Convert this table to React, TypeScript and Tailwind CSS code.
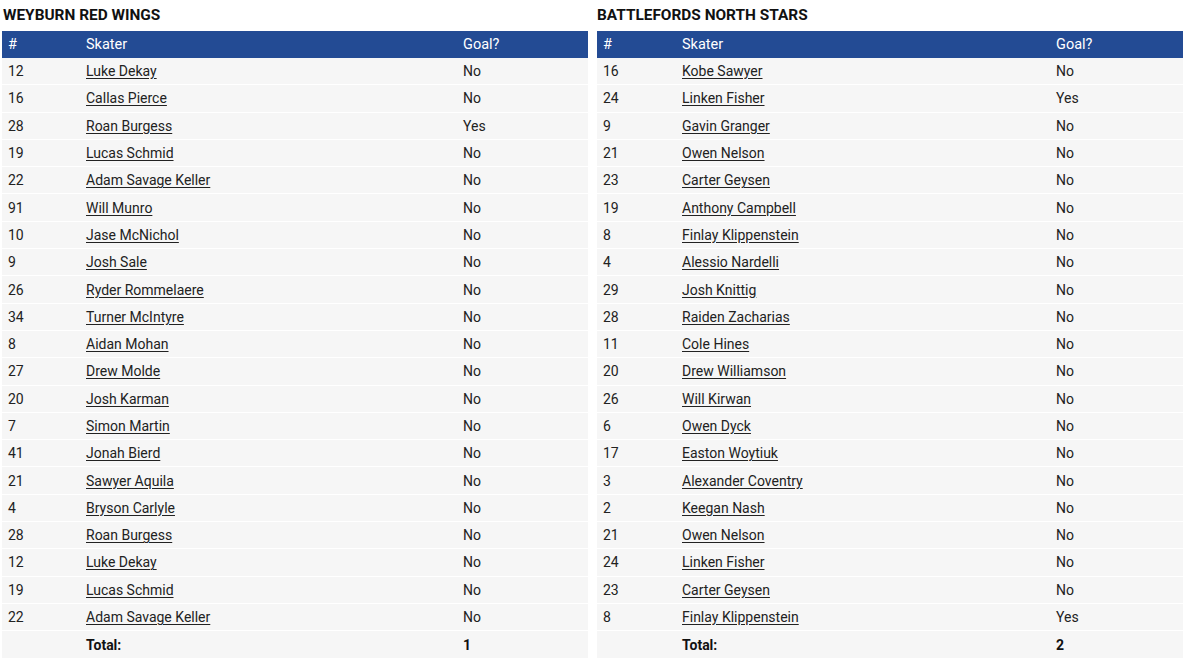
type Row = [number, string, string];

const weyburn: Row[] = [
  [12, "Luke Dekay", "No"],
  [16, "Callas Pierce", "No"],
  [28, "Roan Burgess", "Yes"],
  [19, "Lucas Schmid", "No"],
  [22, "Adam Savage Keller", "No"],
  [91, "Will Munro", "No"],
  [10, "Jase McNichol", "No"],
  [9, "Josh Sale", "No"],
  [26, "Ryder Rommelaere", "No"],
  [34, "Turner McIntyre", "No"],
  [8, "Aidan Mohan", "No"],
  [27, "Drew Molde", "No"],
  [20, "Josh Karman", "No"],
  [7, "Simon Martin", "No"],
  [41, "Jonah Bierd", "No"],
  [21, "Sawyer Aquila", "No"],
  [4, "Bryson Carlyle", "No"],
  [28, "Roan Burgess", "No"],
  [12, "Luke Dekay", "No"],
  [19, "Lucas Schmid", "No"],
  [22, "Adam Savage Keller", "No"],
];

const battlefords: Row[] = [
  [16, "Kobe Sawyer", "No"],
  [24, "Linken Fisher", "Yes"],
  [9, "Gavin Granger", "No"],
  [21, "Owen Nelson", "No"],
  [23, "Carter Geysen", "No"],
  [19, "Anthony Campbell", "No"],
  [8, "Finlay Klippenstein", "No"],
  [4, "Alessio Nardelli", "No"],
  [29, "Josh Knittig", "No"],
  [28, "Raiden Zacharias", "No"],
  [11, "Cole Hines", "No"],
  [20, "Drew Williamson", "No"],
  [26, "Will Kirwan", "No"],
  [6, "Owen Dyck", "No"],
  [17, "Easton Woytiuk", "No"],
  [3, "Alexander Coventry", "No"],
  [2, "Keegan Nash", "No"],
  [21, "Owen Nelson", "No"],
  [24, "Linken Fisher", "No"],
  [23, "Carter Geysen", "No"],
  [8, "Finlay Klippenstein", "Yes"],
];

// column widths differ a little per table (auto layout in the original)
function TeamTable({
  name,
  rows,
  total,
  numCol,
  skaterCol,
}: {
  name: string;
  rows: Row[];
  total: number;
  numCol: string;
  skaterCol: string;
}) {
  return (
    <div className="w-[586px] shrink-0">
      <h2 className="flex h-[31px] items-center text-[15.4px] font-bold uppercase text-[#111]">{name}</h2>
      <div className="flex h-[27px] items-center bg-[#234b94] text-[14.5px] text-white">
        <div className={`${numCol} pl-[6px]`}>#</div>
        <div className={skaterCol}>Skater</div>
        <div>Goal?</div>
      </div>
      {rows.map(([num, skater, goal], i) => (
        <div key={i} className="flex h-[27.3px] items-center border-b border-white bg-[#f6f6f6] pt-px text-[14px] text-[#222]">
          <div className={`${numCol} pl-[6px]`}>{num}</div>
          <div className={skaterCol}>
            <a href="#" className="underline underline-offset-2">{skater}</a>
          </div>
          <div>{goal}</div>
        </div>
      ))}
      <div className="flex h-[27.3px] items-center bg-[#f6f6f6] pt-px text-[14px] font-bold text-[#111]">
        <div className={`${numCol} pl-[6px]`}></div>
        <div className={skaterCol}>Total:</div>
        <div>{total}</div>
      </div>
    </div>
  );
}

export default function App() {
  return (
    <div className="flex h-[658px] gap-[9px] overflow-hidden bg-white pl-[2px] font-['Roboto',sans-serif]">
      <div className="[&_h2]:pl-[1px]">
        <TeamTable name="Weyburn Red Wings" rows={weyburn} total={1} numCol="w-[84px]" skaterCol="w-[377px]" />
      </div>
      <TeamTable name="Battlefords North Stars" rows={battlefords} total={2} numCol="w-[85px]" skaterCol="w-[374px]" />
    </div>
  );
}
